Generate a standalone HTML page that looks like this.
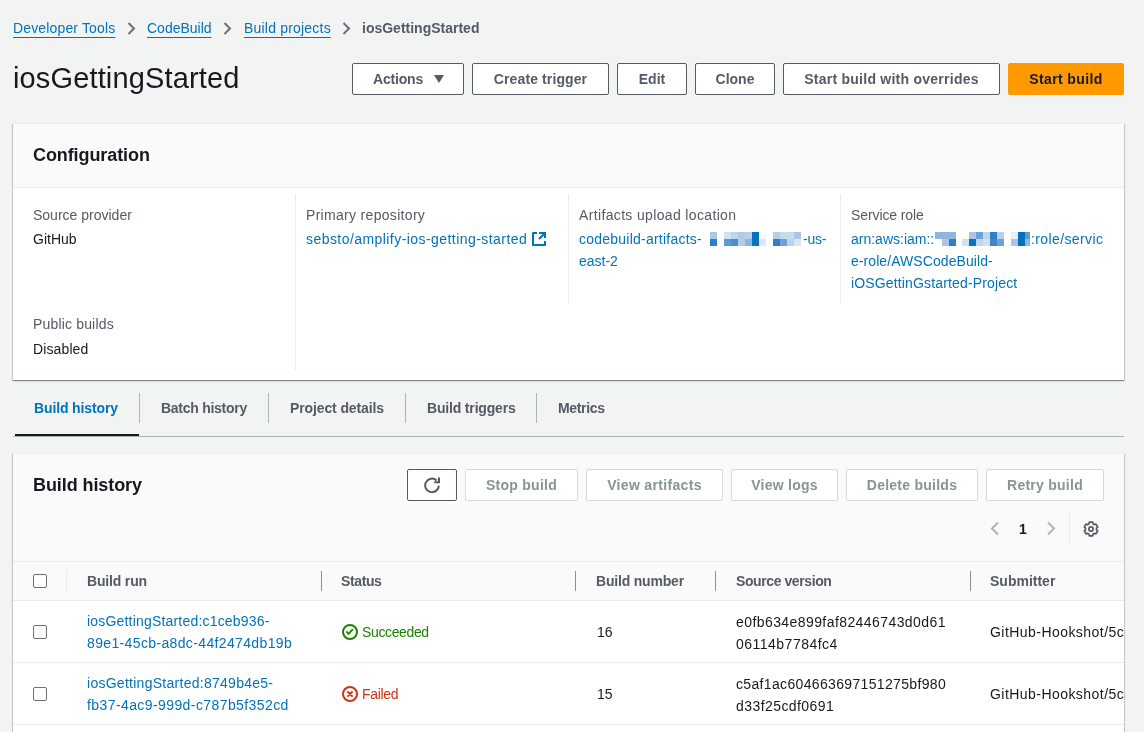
<!DOCTYPE html>
<html><head><meta charset="utf-8">
<style>
html,body{margin:0;padding:0}
body{width:1144px;height:732px;overflow:hidden;background:#f2f3f3;position:relative;font-family:"Liberation Sans",sans-serif;color:#16191f}
.t{position:absolute;white-space:nowrap;font-size:14px;line-height:22px}
.b{font-weight:700}
.lnk{color:#0073bb}
.u{text-decoration:underline;text-underline-offset:4px}
.grey{color:#545b64}
.btn{position:absolute;box-sizing:border-box;height:32px;border:1px solid #545b64;border-radius:2px;background:#fff;color:#545b64;font-weight:700;font-size:14px;line-height:30px;text-align:center;white-space:nowrap}
.btn.pri{background:#ff9900;border-color:#ff9900;color:#16191f}
.btn.dis{border-color:#d5dbdb;color:#879596}
.panel{position:absolute;background:#fff;box-shadow:0 1px 1px 0 rgba(0,28,36,.3),1px 1px 1px 0 rgba(0,28,36,.15),-1px 1px 1px 0 rgba(0,28,36,.15);border-top:1px solid #eaeded;box-sizing:border-box}
.vl{position:absolute;width:1px;background:#eaeded}
.hl{position:absolute;height:1px;background:#eaeded}
.chev{position:absolute}
.cb{position:absolute;box-sizing:border-box;width:14px;height:14px;border:1px solid #687078;border-radius:2px;background:#fff}
.pix{position:absolute}
</style></head><body><div id="wrap" style="position:absolute;left:0;top:0;width:1144px;height:732px;will-change:transform">

<!-- breadcrumbs -->
<div class="t lnk u" style="left:13px;top:17px;letter-spacing:.15px">Developer Tools</div>
<svg class="chev" style="left:127px;top:22px" width="9" height="13" viewBox="0 0 9 13"><path d="M1.5 1 L7 6.5 L1.5 12" fill="none" stroke="#687078" stroke-width="2"/></svg>
<div class="t lnk u" style="left:147px;top:17px">CodeBuild</div>
<svg class="chev" style="left:223px;top:22px" width="9" height="13" viewBox="0 0 9 13"><path d="M1.5 1 L7 6.5 L1.5 12" fill="none" stroke="#687078" stroke-width="2"/></svg>
<div class="t lnk u" style="left:244px;top:17px;letter-spacing:.2px">Build projects</div>
<svg class="chev" style="left:342px;top:22px" width="9" height="13" viewBox="0 0 9 13"><path d="M1.5 1 L7 6.5 L1.5 12" fill="none" stroke="#687078" stroke-width="2"/></svg>
<div class="t b grey" style="left:362px;top:17px">iosGettingStarted</div>

<!-- title -->
<div class="t" style="left:13px;top:60px;font-size:29px;line-height:36px;letter-spacing:.14px">iosGettingStarted</div>

<!-- buttons -->
<div class="btn" style="left:352px;top:63px;width:112px;text-align:left;padding-left:20px;letter-spacing:-.19px">Actions<svg style="position:absolute;left:81px;top:11px" width="10" height="8" viewBox="0 0 10 8"><path d="M0 0 H10 L5 8 Z" fill="#545b64"/></svg></div>
<div class="btn" style="left:472px;top:63px;width:137px;letter-spacing:.11px">Create trigger</div>
<div class="btn" style="left:617px;top:63px;width:70px">Edit</div>
<div class="btn" style="left:695px;top:63px;width:80px">Clone</div>
<div class="btn" style="left:783px;top:63px;width:217px;letter-spacing:.25px">Start build with overrides</div>
<div class="btn pri" style="left:1008px;top:63px;width:116px;letter-spacing:.39px">Start build</div>

<!-- configuration panel -->
<div class="panel" style="left:13px;top:123px;width:1111px;height:257px">
  <div style="position:absolute;left:0;top:0;width:1111px;height:63px;background:#fafafa;border-bottom:1px solid #eaeded"></div>
</div>
<div class="t b" style="left:33px;top:143px;font-size:18px;line-height:24px;letter-spacing:-.09px">Configuration</div>

<div class="vl" style="left:295px;top:194px;height:176px"></div>
<div class="vl" style="left:568px;top:194px;height:110px"></div>
<div class="vl" style="left:840px;top:194px;height:110px"></div>

<div class="t grey" style="left:33px;top:204px">Source provider</div>
<div class="t" style="left:33px;top:228px">GitHub</div>
<div class="t grey" style="left:33px;top:313px;letter-spacing:.17px">Public builds</div>
<div class="t" style="left:33px;top:338px;letter-spacing:.12px">Disabled</div>

<div class="t grey" style="left:306px;top:204px;letter-spacing:.31px">Primary repository</div>
<div class="t lnk" style="left:306px;top:228px;letter-spacing:.44px">sebsto/amplify-ios-getting-started</div>

<div class="t grey" style="left:579px;top:204px;letter-spacing:.35px">Artifacts upload location</div>
<div class="t lnk" style="left:579px;top:228px;letter-spacing:.23px">codebuild-artifacts-</div>
<div class="t lnk" style="left:803px;top:228px;letter-spacing:-.2px">-us-</div>
<div class="t lnk" style="left:579px;top:250px">east-2</div>

<div class="t grey" style="left:851px;top:204px;letter-spacing:-.1px">Service role</div>
<div class="t lnk" style="left:851px;top:228px">arn:aws:iam::</div>
<div class="t lnk" style="left:1031px;top:228px;letter-spacing:.39px">:role/servic</div>
<div class="t lnk" style="left:851px;top:250px;letter-spacing:.07px">e-role/AWSCodeBuild-</div>
<div class="t lnk" style="left:851px;top:272px;letter-spacing:.15px">iOSGettinGstarted-Project</div>

<!-- pixelated -->
<div class="pix" style="left:710px;top:232px;width:7px;height:7px;background:#a9c8e6"></div>
<div class="pix" style="left:724px;top:232px;width:7px;height:7px;background:#d0e1f1"></div>
<div class="pix" style="left:731px;top:232px;width:7px;height:7px;background:#c0d6ec"></div>
<div class="pix" style="left:738px;top:232px;width:7px;height:7px;background:#afcbe6"></div>
<div class="pix" style="left:745px;top:232px;width:7px;height:7px;background:#b8d0ea"></div>
<div class="pix" style="left:752px;top:232px;width:7px;height:7px;background:#0073bb"></div>
<div class="pix" style="left:759px;top:232px;width:7px;height:7px;background:#f5f9fd"></div>
<div class="pix" style="left:773px;top:232px;width:7px;height:7px;background:#b5cfe9"></div>
<div class="pix" style="left:780px;top:232px;width:7px;height:7px;background:#c6dbef"></div>
<div class="pix" style="left:787px;top:232px;width:7px;height:7px;background:#c6dbef"></div>
<div class="pix" style="left:794px;top:232px;width:7px;height:7px;background:#a9c6e6"></div>
<div class="pix" style="left:710px;top:239px;width:7px;height:7px;background:#2f7fc4"></div>
<div class="pix" style="left:724px;top:239px;width:7px;height:7px;background:#5f9bd2"></div>
<div class="pix" style="left:731px;top:239px;width:7px;height:7px;background:#4d8fcd"></div>
<div class="pix" style="left:738px;top:239px;width:7px;height:7px;background:#b3cde8"></div>
<div class="pix" style="left:745px;top:239px;width:7px;height:7px;background:#8fb6df"></div>
<div class="pix" style="left:752px;top:239px;width:7px;height:7px;background:#0a73c0"></div>
<div class="pix" style="left:759px;top:239px;width:7px;height:7px;background:#dce8f5"></div>
<div class="pix" style="left:773px;top:239px;width:7px;height:7px;background:#2f7fc4"></div>
<div class="pix" style="left:780px;top:239px;width:7px;height:7px;background:#6ca3d6"></div>
<div class="pix" style="left:787px;top:239px;width:7px;height:7px;background:#bcd3ec"></div>
<div class="pix" style="left:794px;top:239px;width:7px;height:7px;background:#dae6f4"></div>
<div class="pix" style="left:935px;top:232px;width:7px;height:7px;background:#8fb6df"></div>
<div class="pix" style="left:942px;top:232px;width:7px;height:7px;background:#8fb6df"></div>
<div class="pix" style="left:949px;top:232px;width:7px;height:7px;background:#8fb6df"></div>
<div class="pix" style="left:969px;top:232px;width:7px;height:7px;background:#a9c6e6"></div>
<div class="pix" style="left:976px;top:232px;width:7px;height:7px;background:#6ca3d6"></div>
<div class="pix" style="left:983px;top:232px;width:7px;height:7px;background:#c0d6ec"></div>
<div class="pix" style="left:990px;top:232px;width:7px;height:7px;background:#2f7fc4"></div>
<div class="pix" style="left:997px;top:232px;width:7px;height:7px;background:#b8d0ea"></div>
<div class="pix" style="left:1011px;top:232px;width:7px;height:7px;background:#e6eef8"></div>
<div class="pix" style="left:1018px;top:232px;width:7px;height:7px;background:#0073bb"></div>
<div class="pix" style="left:1025px;top:232px;width:5px;height:7px;background:#5f9bd2"></div>
<div class="pix" style="left:942px;top:239px;width:7px;height:7px;background:#a9c6e6"></div>
<div class="pix" style="left:949px;top:239px;width:7px;height:7px;background:#2f7fc4"></div>
<div class="pix" style="left:962px;top:239px;width:7px;height:7px;background:#d0e1f1"></div>
<div class="pix" style="left:969px;top:239px;width:7px;height:7px;background:#0a73c0"></div>
<div class="pix" style="left:976px;top:239px;width:7px;height:7px;background:#c0d6ec"></div>
<div class="pix" style="left:983px;top:239px;width:7px;height:7px;background:#d0e1f1"></div>
<div class="pix" style="left:990px;top:239px;width:7px;height:7px;background:#3f88c8"></div>
<div class="pix" style="left:997px;top:239px;width:7px;height:7px;background:#6ca3d6"></div>
<div class="pix" style="left:1011px;top:239px;width:7px;height:7px;background:#a9c6e6"></div>
<div class="pix" style="left:1018px;top:239px;width:7px;height:7px;background:#0073bb"></div>
<div class="pix" style="left:1025px;top:239px;width:5px;height:7px;background:#8fb6df"></div>
<svg style="position:absolute;left:531px;top:231px" width="16" height="16" viewBox="0 0 16 16"><path d="M6 2 H2 V14 H14 V10" fill="none" stroke="#0073bb" stroke-width="2" stroke-linejoin="round"/><path d="M8 2 H14 V7 M14 2 L8 8" fill="none" stroke="#0073bb" stroke-width="2"/></svg>

<!-- tabs -->
<div style="position:absolute;left:13px;top:436px;width:1111px;height:1px;background:#aab7b8"></div>
<div style="position:absolute;left:15px;top:434px;width:124px;height:2px;background:#16191f"></div>
<div class="vl" style="left:139px;top:393px;height:30px;background:#aab7b8"></div>
<div class="vl" style="left:268px;top:393px;height:30px;background:#aab7b8"></div>
<div class="vl" style="left:405px;top:393px;height:30px;background:#aab7b8"></div>
<div class="vl" style="left:536px;top:393px;height:30px;background:#aab7b8"></div>
<div class="t b lnk" style="left:34px;top:397px;letter-spacing:-.13px">Build history</div>
<div class="t b grey" style="left:161px;top:397px;letter-spacing:-.27px">Batch history</div>
<div class="t b grey" style="left:290px;top:397px;letter-spacing:-.12px">Project details</div>
<div class="t b grey" style="left:427px;top:397px;letter-spacing:-.17px">Build triggers</div>
<div class="t b grey" style="left:558px;top:397px;letter-spacing:-.34px">Metrics</div>

<!-- build history panel -->
<div class="panel" style="left:13px;top:453px;width:1111px;height:300px;background:#fafafa">
  <div style="position:absolute;left:0;top:107px;width:1111px;height:1px;background:#eaeded"></div>
  <div style="position:absolute;left:0;top:146px;width:1111px;height:1px;background:#eaeded"></div>
  <div style="position:absolute;left:0;top:147px;width:1111px;height:200px;background:#fff"></div>
  <div style="position:absolute;left:0;top:208px;width:1111px;height:1px;background:#eaeded"></div>
  <div style="position:absolute;left:0;top:270px;width:1111px;height:1px;background:#eaeded"></div>
</div>
<div class="t b" style="left:33px;top:473px;font-size:18px;line-height:24px;letter-spacing:-.08px">Build history</div>

<div class="btn" style="left:407px;top:469px;width:50px"><svg style="position:absolute;left:16px;top:7px" width="16" height="16" viewBox="0 0 16 16"><path d="M14.8 8.6 A6.8 6.8 0 1 1 12.6 3.4" fill="none" stroke="#545b64" stroke-width="2"/><path d="M15 0.5 V5.3 H10.3" fill="none" stroke="#545b64" stroke-width="2"/></svg></div>
<div class="btn dis" style="left:465px;top:469px;width:113px;letter-spacing:.28px">Stop build</div>
<div class="btn dis" style="left:586px;top:469px;width:137px;letter-spacing:.33px">View artifacts</div>
<div class="btn dis" style="left:731px;top:469px;width:107px;letter-spacing:.25px">View logs</div>
<div class="btn dis" style="left:846px;top:469px;width:132px;letter-spacing:.25px">Delete builds</div>
<div class="btn dis" style="left:986px;top:469px;width:118px;letter-spacing:.25px">Retry build</div>

<svg style="position:absolute;left:990px;top:521px" width="10" height="15" viewBox="0 0 10 15"><path d="M8 1.5 L2 7.5 L8 13.5" fill="none" stroke="#aab7b8" stroke-width="2"/></svg>
<div class="t b" style="left:1019px;top:518px">1</div>
<svg style="position:absolute;left:1046px;top:521px" width="10" height="15" viewBox="0 0 10 15"><path d="M2 1.5 L8 7.5 L2 13.5" fill="none" stroke="#aab7b8" stroke-width="2"/></svg>
<div class="vl" style="left:1069px;top:513px;height:32px"></div>
<svg style="position:absolute;left:1083px;top:521px" width="16" height="16" viewBox="0 0 16 16"><path d="M5.25 3.24 L5.94 2.90 L6.31 1.21 L9.69 1.21 L10.06 2.90 L10.75 3.24 L11.39 3.67 L13.04 3.14 L14.73 6.07 L13.45 7.23 L13.50 8.00 L13.45 8.77 L14.73 9.93 L13.04 12.86 L11.39 12.33 L10.75 12.76 L10.06 13.10 L9.69 14.79 L6.31 14.79 L5.94 13.10 L5.25 12.76 L4.61 12.33 L2.96 12.86 L1.27 9.93 L2.55 8.77 L2.50 8.00 L2.55 7.23 L1.27 6.07 L2.96 3.14 L4.61 3.67 Z" fill="none" stroke="#545b64" stroke-width="1.7" stroke-linejoin="round"/><circle cx="8" cy="8" r="2.1" fill="none" stroke="#545b64" stroke-width="1.7"/></svg>

<!-- table header -->
<div class="cb" style="left:33px;top:574px"></div>
<div class="vl" style="left:66px;top:571px;height:20px"></div>
<div class="t b grey" style="left:87px;top:570px;letter-spacing:-.17px">Build run</div>
<div class="vl" style="left:321px;top:571px;height:20px;background:#879596"></div>
<div class="t b grey" style="left:341px;top:570px;letter-spacing:-.38px">Status</div>
<div class="vl" style="left:575px;top:571px;height:20px;background:#879596"></div>
<div class="t b grey" style="left:596px;top:570px;letter-spacing:-.19px">Build number</div>
<div class="vl" style="left:715px;top:571px;height:20px;background:#879596"></div>
<div class="t b grey" style="left:736px;top:570px;letter-spacing:-.41px">Source version</div>
<div class="vl" style="left:970px;top:571px;height:20px;background:#879596"></div>
<div class="t b grey" style="left:990px;top:570px">Submitter</div>

<!-- row 1 -->
<div class="cb" style="left:33px;top:625px"></div>
<div class="t lnk" style="left:87px;top:610px;letter-spacing:.19px">iosGettingStarted:c1ceb936-</div>
<div class="t lnk" style="left:87px;top:632px;letter-spacing:.36px">89e1-45cb-a8dc-44f2474db19b</div>
<svg style="position:absolute;left:342px;top:624px" width="16" height="16" viewBox="0 0 16 16"><circle cx="8" cy="8" r="7" fill="none" stroke="#1d8102" stroke-width="2"/><path d="M4.3 7.4 L6.6 9.8 L10.9 5.2" fill="none" stroke="#1d8102" stroke-width="1.9"/></svg>
<div class="t" style="left:362px;top:621px;color:#1d8102;letter-spacing:-.37px">Succeeded</div>
<div class="t" style="left:597px;top:621px">16</div>
<div class="t" style="left:736px;top:611px;letter-spacing:.42px">e0fb634e899faf82446743d0d61</div>
<div class="t" style="left:736px;top:633px;letter-spacing:.49px">06114b7784fc4</div>
<div style="position:absolute;left:0;top:0;width:1124px;height:732px;overflow:hidden"><div class="t" style="left:990px;top:621px;letter-spacing:.45px">GitHub-Hookshot/5c</div>

<!-- row 2 -->
<div class="cb" style="left:33px;top:687px"></div>
<div class="t lnk" style="left:87px;top:672px;letter-spacing:.27px">iosGettingStarted:8749b4e5-</div>
<div class="t lnk" style="left:87px;top:694px;letter-spacing:.41px">fb37-4ac9-999d-c787b5f352cd</div>
<svg style="position:absolute;left:342px;top:686px" width="16" height="16" viewBox="0 0 16 16"><circle cx="8" cy="8" r="7" fill="none" stroke="#d13212" stroke-width="2"/><path d="M6 6 L10 10 M10 6 L6 10" fill="none" stroke="#d13212" stroke-width="1.9" stroke-linecap="round"/></svg>
<div class="t" style="left:362px;top:683px;color:#d13212;letter-spacing:-.3px">Failed</div>
<div class="t" style="left:597px;top:683px">15</div>
<div class="t" style="left:736px;top:673px;letter-spacing:.34px">c5af1ac604663697151275bf980</div>
<div class="t" style="left:736px;top:695px;letter-spacing:.43px">d33f25cdf0691</div>
<div class="t" style="left:990px;top:683px;letter-spacing:.45px">GitHub-Hookshot/5c</div></div>

<!-- clip right side -->

</div></body></html>
